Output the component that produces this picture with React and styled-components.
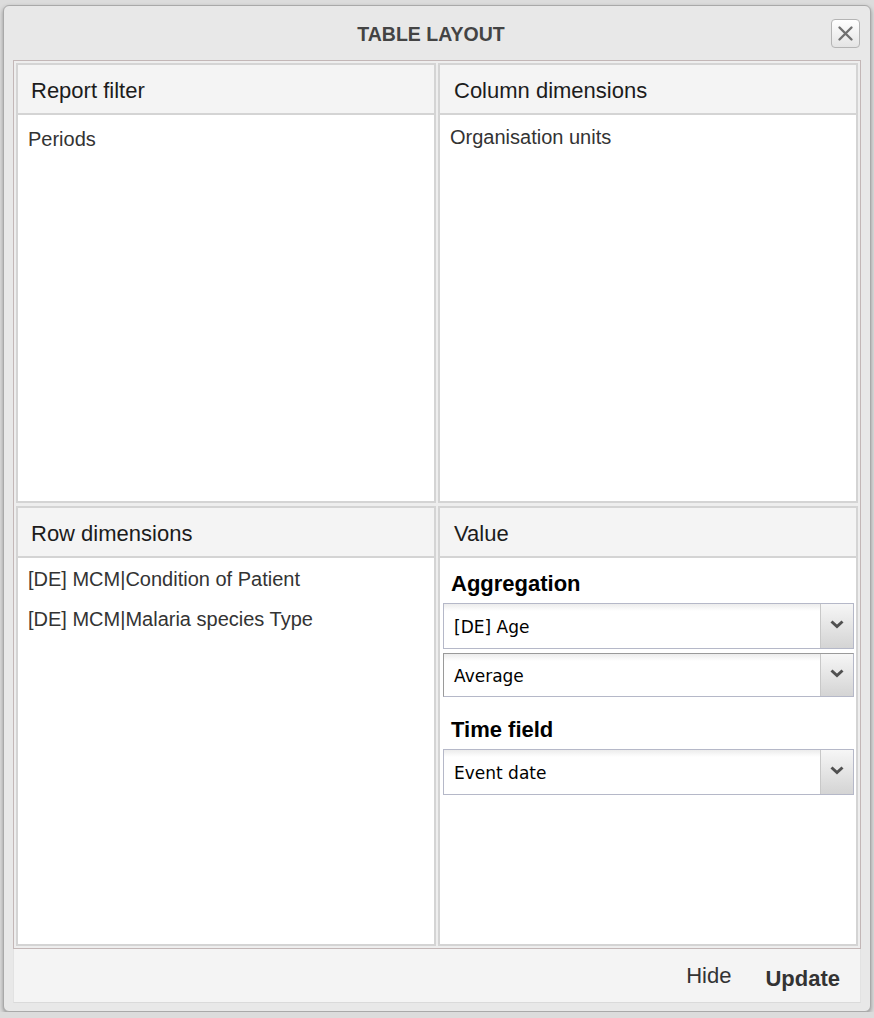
import React from 'react';
import styled, { createGlobalStyle } from 'styled-components';

const GlobalStyle = createGlobalStyle`
  html, body {
    margin: 0;
    padding: 0;
    background: #dcdcdc;
    font-family: "Liberation Sans", Arial, sans-serif;
  }
  * { box-sizing: border-box; }
`;

const Window = styled.div`
  margin: 5px 0 0 3px;
  width: 868px;
  height: 1007px;
  background: #e8e8e8;
  border: 1px solid #a9a9a9;
  border-radius: 6px;
  box-shadow: 0 2px 4px rgba(0, 0, 0, 0.35);
  padding: 0 9px 8px;
  display: flex;
  flex-direction: column;
`;

const Header = styled.div`
  height: 54px;
  display: grid;
  grid-template-columns: 1fr auto;
  align-items: center;
  margin-right: 1px;
`;

const Title = styled.div`
  padding-left: 18px;
  text-align: center;
  font-weight: bold;
  font-size: 19.5px;
  color: #444;
  padding-top: 3px;
`;

const CloseButton = styled.button`
  width: 29px;
  height: 29px;
  padding: 0;
  margin-top: 0;
  border: 1px solid #b4b4b4;
  border-radius: 4px;
  background: linear-gradient(#ffffff, #e4e4e4);
  display: flex;
  align-items: center;
  justify-content: center;
  cursor: pointer;
`;

const Body = styled.div`
  border: 1px solid #c3b7b7;
  padding: 2px;
  display: grid;
  grid-template-columns: 420px 420px;
  grid-template-rows: 440px 440px;
  column-gap: 2px;
  row-gap: 3px;
  background: #eeeeee;
`;

const Panel = styled.div`
  border: 2px solid #d4d4d4;
  background: #fff;
  display: flex;
  flex-direction: column;
`;

const PanelHeader = styled.div`
  height: 50px;
  flex-shrink: 0;
  background: #f4f4f4;
  border-bottom: 2px solid #d4d4d4;
  display: flex;
  align-items: center;
  padding-top: 3px;
  padding-left: ${(p) => (p.$wide ? 14 : 13)}px;
  font-size: 22px;
  color: #1c1c1c;
`;

const ItemList = styled.div`
  padding: ${(p) => p.$top || 2}px 10px 0;
`;

const Item = styled.div`
  height: 40px;
  line-height: 40px;
  font-size: 20px;
  color: #333;
  white-space: nowrap;
`;

const ValueBody = styled.div`
  padding: 13px 2px 0 3px;
  display: flex;
  flex-direction: column;
`;

const Label = styled.div`
  font-weight: bold;
  font-size: 22px;
  line-height: 26px;
  color: #000;
  padding-left: 8px;
  margin-top: ${(p) => p.$top || 0}px;
  margin-bottom: 6px;
`;

const Combo = styled.div`
  height: ${(p) => p.$h || 46}px;
  display: flex;
  border: 1px solid ${(p) => (p.$focus ? '#9a9a9a' : '#b5b8c8')};
  border-right-color: #b5b8c8;
  border-bottom-color: #b5b8c8;
  margin-bottom: 4px;
  background: #fff;
`;

const ComboText = styled.div`
  flex: 1;
  display: flex;
  align-items: center;
  padding-left: 10px;
  padding-top: 2px;
  font-family: "DejaVu Sans", Verdana, sans-serif;
  font-size: 17px;
  color: #000;
  background: linear-gradient(#ececec 0, #ffffff 7px);
`;

const Trigger = styled.div`
  width: 33px;
  border-left: 1px solid #c8c8c8;
  background: linear-gradient(#f6f6f6, #d4d4d4);
  display: flex;
  align-items: center;
  justify-content: center;
  padding-bottom: 4px;
`;

const Footer = styled.div`
  height: 54px;
  background: #f4f4f4;
  border-bottom: 1px solid #dadada;
  border-left: 1px solid #e2e2e2;
  border-right: 1px solid #e2e2e2;
  display: flex;
  justify-content: flex-end;
  align-items: center;
  gap: 34px;
  padding: 0 20px 0 0;
`;

const FooterButton = styled.button`
  border: none;
  background: none;
  padding: 0;
  font-family: "Liberation Sans", Arial, sans-serif;
  font-size: 22px;
  font-weight: ${(p) => (p.$primary ? 'bold' : 'normal')};
  color: #333;
  margin-top: ${(p) => (p.$primary ? 6 : 0)}px;
  cursor: pointer;
`;

const Chevron = () => (
  <svg width="16" height="10" viewBox="0 0 16 10">
    <path d="M2.5 2.5 L8 7.5 L13.5 2.5" fill="none" stroke="#505050" strokeWidth="3" />
  </svg>
);

const CloseIcon = () => (
  <svg width="19" height="19" viewBox="0 0 19 19">
    <path d="M3.5 3.5 L15.5 15.5 M15.5 3.5 L3.5 15.5" stroke="#707070" strokeWidth="2.4" strokeLinecap="round" />
  </svg>
);

const ComboBox = ({ value, focus, h }) => (
  <Combo $focus={focus} $h={h}>
    <ComboText>{value}</ComboText>
    <Trigger>
      <Chevron />
    </Trigger>
  </Combo>
);

const App = () => (
  <>
    <GlobalStyle />
    <Window>
      <Header>
        <Title>TABLE LAYOUT</Title>
        <CloseButton aria-label="Close">
          <CloseIcon />
        </CloseButton>
      </Header>
      <Body>
        <Panel>
          <PanelHeader>Report filter</PanelHeader>
          <ItemList $top={4}>
            <Item>Periods</Item>
          </ItemList>
        </Panel>
        <Panel>
          <PanelHeader $wide>Column dimensions</PanelHeader>
          <ItemList $top={2}>
            <Item>Organisation units</Item>
          </ItemList>
        </Panel>
        <Panel>
          <PanelHeader>Row dimensions</PanelHeader>
          <ItemList $top={1}>
            <Item>[DE] MCM|Condition of Patient</Item>
            <Item>[DE] MCM|Malaria species Type</Item>
          </ItemList>
        </Panel>
        <Panel>
          <PanelHeader $wide>Value</PanelHeader>
          <ValueBody>
            <Label>Aggregation</Label>
            <ComboBox value="[DE] Age" />
            <ComboBox value="Average" focus h={44} />
            <Label $top={16}>Time field</Label>
            <ComboBox value="Event date" />
          </ValueBody>
        </Panel>
      </Body>
      <Footer>
        <FooterButton>Hide</FooterButton>
        <FooterButton $primary>Update</FooterButton>
      </Footer>
    </Window>
  </>
);

export default App;
